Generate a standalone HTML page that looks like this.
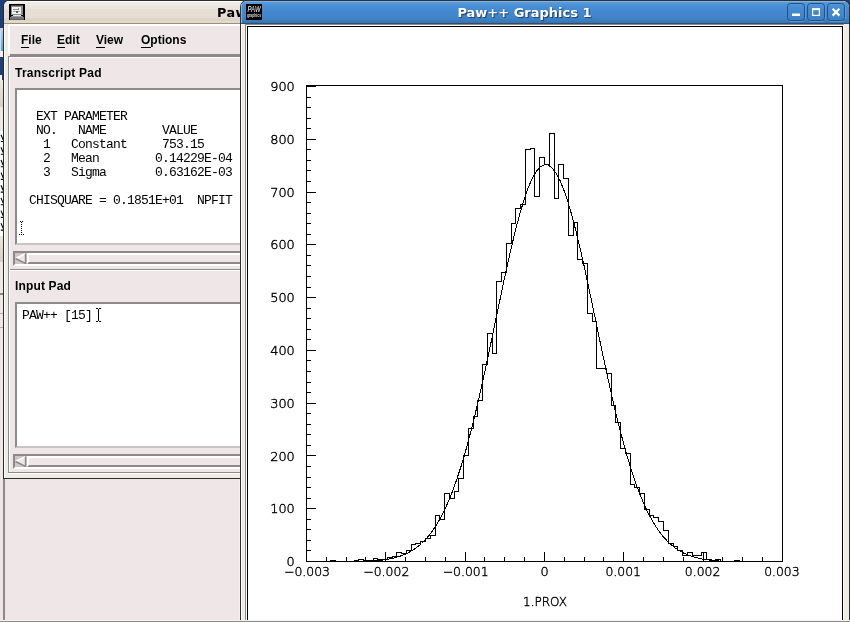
<!DOCTYPE html>
<html><head><meta charset="utf-8"><title>Paw++ Graphics 1</title>
<style>
html,body{margin:0;padding:0;}
body{width:850px;height:622px;overflow:hidden;background:#efe7e7;position:relative;font-family:"Liberation Sans",sans-serif;}
.a{position:absolute;}
.mono{font-family:"Liberation Mono",monospace;font-size:13px;letter-spacing:-0.8px;line-height:14px;white-space:pre;color:#000;}
.lbl{font-family:"Liberation Sans",sans-serif;font-weight:bold;font-size:12px;color:#000;white-space:pre;line-height:14px;}
.ta{background:#fff;border-style:solid;border-width:2px;border-color:#8e8a8a #c9c4c4 #c9c4c4 #8e8a8a;box-sizing:border-box;}
.sb{background:#cfc5c8;border-style:solid;border-width:2px;border-color:#8e8888 #fff #fff #8e8888;box-sizing:border-box;}
.sl{background:#efe7e7;border-style:solid;border-width:2px;border-color:#fff #8e8888 #8e8888 #fff;box-sizing:border-box;}
svg{position:absolute;left:0;top:0;}
svg text{font-family:"DejaVu Sans","Liberation Sans",sans-serif;font-weight:200;font-size:12px;fill:#000;stroke:#000;stroke-width:0.4px;}
</style></head><body>
<div id="w" class="a" style="left:0;top:0;width:850px;height:622px;will-change:transform">

<!-- left background strip -->
<div class="a" style="left:0;top:0;width:12px;height:28px;background:#1c3e7c"></div>
<div class="a" style="left:0;top:28px;width:4px;height:3px;background:#c4d2e6"></div>
<div class="a" style="left:0;top:31px;width:4px;height:20px;background:linear-gradient(#a8ccf4,#5a9ee4)"></div>
<div class="a" style="left:0;top:31px;width:1px;height:20px;background:#cfe0f4"></div>
<div class="a" style="left:0;top:51px;width:4px;height:6px;background:#eef2f8"></div>
<div class="a" style="left:0;top:57px;width:4px;height:23px;background:#1c3e7c"></div>
<div class="a" style="left:0;top:75px;width:2px;height:5px;background:#f4f4f4"></div>
<div class="a" style="left:0;top:80px;width:4px;height:27px;background:linear-gradient(#eee8e2,#d6cec2)"></div>
<div class="a" style="left:0;top:107px;width:4px;height:24px;background:#efe9e6"></div>
<div class="a" style="left:0;top:131px;width:4px;height:105px;background:#fff"></div>
<svg class="a" style="left:0;top:0" width="4" height="240" viewBox="0 0 4 240"><path d="M1 134.7L3.2 139.9M0.8 141.5h2.2 M1 147.3L3.2 152.5M0.8 154.2h2.2 M1 160.0L3.2 165.2M0.8 166.8h2.2 M1 172.6L3.2 177.8M0.8 179.4h2.2 M1 185.3L3.2 190.5M0.8 192.1h2.2 M1 197.9L3.2 203.1M0.8 204.8h2.2 M1 210.6L3.2 215.8M0.8 217.4h2.2 M1 223.2L3.2 228.4M0.8 230.1h2.2" stroke="#000" stroke-width="1.1" fill="none"/></svg>
<div class="a" style="left:0;top:236px;width:4px;height:26px;background:linear-gradient(#ece6e0,#d6cec2)"></div>
<div class="a" style="left:0;top:262px;width:4px;height:31px;background:#efe9e6"></div>
<div class="a" style="left:0;top:293px;width:4px;height:2px;background:#8a8686"></div>
<div class="a" style="left:0;top:313px;width:4px;height:1px;background:#b4aeae"></div>
<div class="a" style="left:0;top:327px;width:4px;height:1px;background:#b4aeae"></div>

<!-- left window (Paw++ executive) -->
<div class="a" style="left:3px;top:0;width:248px;height:479px;background:#2c2c26;border-top-left-radius:6px"></div>
<div class="a" style="left:4px;top:1px;width:247px;height:477px;background:#efebe7;border-top-left-radius:5px"></div>
<div class="a" style="left:4px;top:1px;width:247px;height:22px;border-top-left-radius:5px;background:linear-gradient(#fff 0,#fff 1px,#efece7 1px,#efece7 4px,#eee5dc 4px,#eee5dc 6px,#e8e4de 6px,#e8e4de 8px,#e6ded4 8px,#e6ded4 17px,#dcd5c8 17px,#dcd5c8 20px,#e2d8cb 20px)"></div>
<div class="a" style="left:4px;top:23px;width:240px;height:1px;background:#9c8e7a"></div>
<div class="a" style="left:4px;top:24px;width:1px;height:454px;background:#fff"></div>
<!-- icon -->
<svg class="a" style="left:9px;top:4px" width="16" height="16" viewBox="0 0 16 16" shape-rendering="crispEdges">
<rect width="16" height="16" fill="#000"/><rect x="2" y="1" width="12" height="10" fill="#8c8c8c"/><rect x="2" y="1" width="12" height="1" fill="#4a4a4a"/><rect x="3" y="3" width="9" height="7" fill="#f2f2f2"/>
<rect x="4" y="5" width="6" height="1" fill="#8a8a8a"/><rect x="4" y="7" width="7" height="1" fill="#a0a0a0"/><rect x="7" y="7" width="2" height="2" fill="#5a5a5a"/><rect x="9" y="4" width="1" height="2" fill="#888"/>
<rect x="4" y="11" width="8" height="1" fill="#e6e6e6"/>
<polygon points="2,12 14,12 15.5,16 0.5,16" fill="#767676"/><rect x="3" y="12" width="10" height="1" fill="#9c9c9c"/><rect x="1" y="15" width="14" height="1" fill="#5c5c5c"/>
</svg>
<div class="a" style="left:217px;top:5px;font-family:'DejaVu Sans','Liberation Sans',sans-serif;font-weight:bold;font-size:12.8px;line-height:16px;letter-spacing:0.45px;color:#000;white-space:pre">Paw++</div>

<!-- menubar -->
<div class="a" style="left:8px;top:24px;width:236px;height:30px;background:#fff"></div>
<div class="a" style="left:10px;top:26px;width:234px;height:28px;background:#efe7e7"></div>
<div class="a" style="left:10px;top:54px;width:234px;height:2px;background:#8e8888"></div>
<div class="a lbl" style="left:21px;top:33px">File</div>
<div class="a lbl" style="left:57px;top:33px">Edit</div>
<div class="a lbl" style="left:96px;top:33px">View</div>
<div class="a lbl" style="left:141px;top:33px">Options</div>
<div class="a" style="left:21px;top:47px;width:8px;height:1px;background:#000"></div>
<div class="a" style="left:57px;top:47px;width:8px;height:1px;background:#000"></div>
<div class="a" style="left:96px;top:47px;width:9px;height:1px;background:#000"></div>
<div class="a" style="left:141px;top:47px;width:10px;height:1px;background:#000"></div>

<!-- paned frame -->
<div class="a" style="left:8px;top:56px;width:236px;height:417px;background:#8e8888"></div>
<div class="a" style="left:9px;top:57px;width:235px;height:416px;background:#fff"></div>
<div class="a" style="left:10px;top:58px;width:234px;height:414px;background:#efe7e7"></div>
<div class="a" style="left:8px;top:472px;width:236px;height:1px;background:#8e8888"></div>
<div class="a" style="left:8px;top:473px;width:236px;height:1px;background:#fff"></div>

<div class="a lbl" style="left:15px;top:66px;letter-spacing:0.25px">Transcript Pad</div>
<div class="a ta" style="left:15px;top:88px;width:240px;height:157px"></div>
<div class="a mono" style="left:22px;top:96px">
  EXT PARAMETER
  NO.   NAME        VALUE
   1   Constant     753.15
   2   Mean        0.14229E-04
   3   Sigma       0.63162E-03

 CHISQUARE = 0.1851E+01  NPFIT</div>
<!-- stippled I-beam -->
<svg class="a" style="left:18px;top:221px" width="7" height="15" viewBox="0 0 7 15" shape-rendering="crispEdges">
<path d="M2 0.5h1M4 0.5h1M3 1.5h1M3 3.5h1M3 5.5h1M3 7.5h1M3 9.5h1M3 11.5h1M1 13.5h1M3 13.5h1M5 13.5h1" stroke="#000" stroke-width="1" fill="none"/>
</svg>
<div class="a sb" style="left:13px;top:251px;width:240px;height:15px"></div>
<svg class="a" style="left:15px;top:253px" width="12" height="11" viewBox="0 0 12 11">
<polygon points="0.5,5.5 10.5,0.5 10.5,10.5" fill="#efe7e7"/><path d="M0.5 5.5L10.5 0.5" stroke="#fff" stroke-width="1.4"/><path d="M10.5 0.5V10.5L0.5 5.5" stroke="#8e8888" stroke-width="1.4" fill="none"/>
</svg>
<div class="a sl" style="left:27px;top:253px;width:230px;height:11px"></div>

<div class="a" style="left:10px;top:269px;width:234px;height:1px;background:#8e8888"></div>
<div class="a" style="left:10px;top:270px;width:234px;height:1px;background:#fff"></div>

<div class="a lbl" style="left:15px;top:279px;letter-spacing:0.15px">Input Pad</div>
<div class="a ta" style="left:15px;top:302px;width:240px;height:146px"></div>
<div class="a mono" style="left:22px;top:309px">PAW++ [15]</div>
<svg class="a" style="left:96px;top:308px" width="6" height="14" viewBox="0 0 6 14" shape-rendering="crispEdges">
<path d="M0 0.5h2M3 0.5h2M2.5 1v12M0 13.5h2M3 13.5h2" stroke="#000" stroke-width="1" fill="none"/>
</svg>
<div class="a sb" style="left:13px;top:454px;width:240px;height:15px"></div>
<svg class="a" style="left:15px;top:456px" width="12" height="11" viewBox="0 0 12 11">
<polygon points="0.5,5.5 10.5,0.5 10.5,10.5" fill="#efe7e7"/><path d="M0.5 5.5L10.5 0.5" stroke="#fff" stroke-width="1.4"/><path d="M10.5 0.5V10.5L0.5 5.5" stroke="#8e8888" stroke-width="1.4" fill="none"/>
</svg>
<div class="a sl" style="left:27px;top:456px;width:230px;height:11px"></div>

<!-- below the left window -->
<div class="a" style="left:3px;top:479px;width:2px;height:141px;background:#8e8888"></div>

<!-- graphics window -->
<div class="a" style="left:840px;top:0;width:10px;height:10px;background:#1c3e7c"></div>
<div class="a" style="left:239px;top:479px;width:1px;height:141px;background:#f7efef"></div>
<div class="a" style="left:240px;top:0;width:610px;height:620px;background:#30302c;border-radius:7px 7px 0 0"></div>
<div class="a" style="left:241px;top:1px;width:608px;height:619px;background:#efebe7;border-radius:6px 6px 0 0"></div>
<div class="a" style="left:241px;top:1px;width:608px;height:23px;border-radius:6px 6px 0 0;background:linear-gradient(#7ab4f0 0,#7ab4f0 1px,#5a9ad8 1px,#4f93d6 4px,#4a8fd6 5px,#438ad0 9px,#4285cc 15px,#3a80c4 19px,#3a75b2 21px,#3a75b2 22px,#2c4e70 22px)"></div>
<div class="a" style="left:241px;top:4px;width:1px;height:19px;background:#7ab4f0"></div>
<div class="a" style="left:241px;top:24px;width:1px;height:596px;background:#fff"></div>
<!-- title text -->
<div class="a" style="left:264px;top:3px;width:521px;text-align:center;font-family:'DejaVu Sans','Liberation Sans',sans-serif;font-weight:bold;font-size:13px;line-height:20px;color:#fff;text-shadow:1px 1px 1px #1c3c66;white-space:pre">Paw++ Graphics 1</div>
<!-- PAW icon -->
<svg class="a" style="left:246px;top:4px" width="16" height="16" viewBox="0 0 16 16">
<rect width="16" height="16" fill="#000"/>
<text x="8" y="7.5" text-anchor="middle" style="font-family:'Liberation Sans',sans-serif;font-size:8.5px;font-style:italic;font-weight:400;stroke:none;fill:#fff" textLength="13" lengthAdjust="spacingAndGlyphs">PAW</text>
<text x="8" y="13" text-anchor="middle" style="font-family:'Liberation Sans',sans-serif;font-size:5px;font-weight:bold;stroke:none;fill:#ddd" textLength="14" lengthAdjust="spacingAndGlyphs">graphics</text>
</svg>
<!-- buttons -->
<svg class="a" style="left:786px;top:2px" width="62" height="21" viewBox="0 0 62 21">
<g fill="none" stroke="#28507e" stroke-width="1">
<rect x="1.5" y="1.5" width="17" height="17" rx="3"/><rect x="21.5" y="1.5" width="17" height="17" rx="3"/><rect x="41.5" y="1.5" width="17" height="17" rx="3"/>
</g>
<g fill="none" stroke="#5d9fe0" stroke-width="1" opacity="0.8">
<path d="M3.5 19.5h14M19.5 4v13M23.5 19.5h14M39.5 4v13M43.5 19.5h14M59.5 4v13"/>
</g>
<rect x="6" y="11.5" width="8" height="2.5" fill="#fff"/>
<rect x="26.6" y="7" width="6.8" height="6.4" fill="none" stroke="#fff" stroke-width="1.2"/><rect x="26" y="6.2" width="8" height="2" fill="#fff"/>
<path d="M46.6 6.8l6.8 6.8M53.4 6.8l-6.8 6.8" stroke="#fff" stroke-width="2.2"/>
</svg>

<!-- canvas frame -->
<div class="a" style="left:245px;top:24px;width:599px;height:596px;background:#8e8882"></div>
<div class="a" style="left:246px;top:25px;width:598px;height:595px;background:#fff"></div>
<div class="a" style="left:247px;top:26px;width:596px;height:594px;background:#000"></div>
<div class="a" style="left:248px;top:27px;width:594px;height:593px;background:#fff"></div>

<svg width="850" height="622" viewBox="0 0 850 622">
<defs><clipPath id="cb"><rect x="306" y="85" width="477" height="477"/></clipPath></defs>
<g shape-rendering="crispEdges" fill="none" stroke="#000" stroke-width="1">
<rect x="306.5" y="85.5" width="476" height="476"/>
<path d="M306 561.5h10 M306 550.5h5 M306 540.5h5 M306 529.5h5 M306 519.5h5 M306 508.5h10 M306 498.5h5 M306 487.5h5 M306 477.5h5 M306 466.5h5 M306 455.5h10 M306 445.5h5 M306 434.5h5 M306 424.5h5 M306 413.5h5 M306 403.5h10 M306 392.5h5 M306 382.5h5 M306 371.5h5 M306 360.5h5 M306 350.5h10 M306 339.5h5 M306 329.5h5 M306 318.5h5 M306 308.5h5 M306 297.5h10 M306 287.5h5 M306 276.5h5 M306 265.5h5 M306 255.5h5 M306 244.5h10 M306 234.5h5 M306 223.5h5 M306 213.5h5 M306 202.5h5 M306 192.5h10 M306 181.5h5 M306 170.5h5 M306 160.5h5 M306 149.5h5 M306 139.5h10 M306 128.5h5 M306 118.5h5 M306 107.5h5 M306 97.5h5 M306 86.5h10 M306.5 562v-10 M326.5 562v-5 M346.5 562v-5 M365.5 562v-5 M385.5 562v-10 M405.5 562v-5 M425.5 562v-5 M445.5 562v-5 M465.5 562v-10 M484.5 562v-5 M504.5 562v-5 M524.5 562v-5 M544.5 562v-10 M564.5 562v-5 M584.5 562v-5 M603.5 562v-5 M623.5 562v-10 M643.5 562v-5 M663.5 562v-5 M683.5 562v-5 M703.5 562v-10 M722.5 562v-5 M742.5 562v-5 M762.5 562v-5 M782.5 562v-10"/>
<g clip-path="url(#cb)"><path d="M306.5 561.5 L306.5 561.5 L311.5 561.5 L311.5 561.5 L316.5 561.5 L316.5 561.5 L320.5 561.5 L320.5 561.5 L325.5 561.5 L325.5 561.5 L330.5 561.5 L330.5 560.5 L335.5 560.5 L335.5 561.5 L339.5 561.5 L339.5 561.5 L344.5 561.5 L344.5 561.5 L349.5 561.5 L349.5 561.5 L354.5 561.5 L354.5 560.5 L358.5 560.5 L358.5 559.5 L363.5 559.5 L363.5 560.5 L368.5 560.5 L368.5 560.5 L373.5 560.5 L373.5 558.5 L377.5 558.5 L377.5 559.5 L382.5 559.5 L382.5 559.5 L387.5 559.5 L387.5 557.5 L392.5 557.5 L392.5 556.5 L396.5 556.5 L396.5 552.5 L401.5 552.5 L401.5 553.5 L406.5 553.5 L406.5 550.5 L411.5 550.5 L411.5 544.5 L415.5 544.5 L415.5 543.5 L420.5 543.5 L420.5 541.5 L425.5 541.5 L425.5 538.5 L430.5 538.5 L430.5 535.5 L435.5 535.5 L435.5 515.5 L439.5 515.5 L439.5 519.5 L444.5 519.5 L444.5 493.5 L449.5 493.5 L449.5 498.5 L454.5 498.5 L454.5 491.5 L458.5 491.5 L458.5 478.5 L463.5 478.5 L463.5 455.5 L468.5 455.5 L468.5 428.5 L473.5 428.5 L473.5 416.5 L477.5 416.5 L477.5 400.5 L482.5 400.5 L482.5 364.5 L487.5 364.5 L487.5 333.5 L492.5 333.5 L492.5 353.5 L496.5 353.5 L496.5 281.5 L501.5 281.5 L501.5 272.5 L506.5 272.5 L506.5 243.5 L511.5 243.5 L511.5 223.5 L515.5 223.5 L515.5 208.5 L520.5 208.5 L520.5 204.5 L525.5 204.5 L525.5 149.5 L530.5 149.5 L530.5 148.5 L534.5 148.5 L534.5 196.5 L539.5 196.5 L539.5 157.5 L544.5 157.5 L544.5 164.5 L549.5 164.5 L549.5 133.5 L554.5 133.5 L554.5 198.5 L558.5 198.5 L558.5 164.5 L563.5 164.5 L563.5 178.5 L568.5 178.5 L568.5 235.5 L573.5 235.5 L573.5 222.5 L577.5 222.5 L577.5 259.5 L582.5 259.5 L582.5 263.5 L587.5 263.5 L587.5 313.5 L592.5 313.5 L592.5 321.5 L596.5 321.5 L596.5 368.5 L601.5 368.5 L601.5 368.5 L606.5 368.5 L606.5 373.5 L611.5 373.5 L611.5 405.5 L615.5 405.5 L615.5 422.5 L620.5 422.5 L620.5 448.5 L625.5 448.5 L625.5 453.5 L630.5 453.5 L630.5 484.5 L634.5 484.5 L634.5 487.5 L639.5 487.5 L639.5 493.5 L644.5 493.5 L644.5 509.5 L649.5 509.5 L649.5 515.5 L653.5 515.5 L653.5 517.5 L658.5 517.5 L658.5 521.5 L663.5 521.5 L663.5 530.5 L668.5 530.5 L668.5 543.5 L673.5 543.5 L673.5 546.5 L677.5 546.5 L677.5 550.5 L682.5 550.5 L682.5 555.5 L687.5 555.5 L687.5 552.5 L692.5 552.5 L692.5 555.5 L696.5 555.5 L696.5 555.5 L701.5 555.5 L701.5 552.5 L706.5 552.5 L706.5 559.5 L711.5 559.5 L711.5 560.5 L715.5 560.5 L715.5 559.5 L720.5 559.5 L720.5 561.5 L725.5 561.5 L725.5 561.5 L730.5 561.5 L730.5 561.5 L734.5 561.5 L734.5 560.5 L739.5 560.5 L739.5 561.5 L744.5 561.5 L744.5 561.5 L749.5 561.5 L749.5 561.5 L753.5 561.5 L753.5 561.5 L758.5 561.5 L758.5 561.5 L763.5 561.5 L763.5 561.5 L768.5 561.5 L768.5 561.5 L772.5 561.5 L772.5 561.5 L777.5 561.5 L777.5 561.5 L782.5 561.5 L782.5 561.5"/>
<polyline points="306.5,562.0 310.5,562.0 314.4,562.0 318.4,562.0 322.4,562.0 326.3,562.0 330.3,562.0 334.3,561.9 338.2,561.9 342.2,561.9 346.2,561.9 350.1,561.8 354.1,561.7 358.1,561.6 362.0,561.5 366.0,561.4 370.0,561.1 373.9,560.9 377.9,560.5 381.9,560.1 385.8,559.5 389.8,558.8 393.8,558.0 397.7,556.9 401.7,555.6 405.7,554.0 409.6,552.0 413.6,549.6 417.6,546.8 421.5,543.5 425.5,539.5 429.5,534.9 433.4,529.6 437.4,523.4 441.4,516.4 445.3,508.4 449.3,499.4 453.3,489.3 457.2,478.1 461.2,465.9 465.2,452.5 469.1,438.0 473.1,422.6 477.1,406.1 481.0,388.8 485.0,370.8 489.0,352.3 492.9,333.3 496.9,314.3 500.9,295.3 504.8,276.6 508.8,258.6 512.8,241.4 516.7,225.4 520.7,210.8 524.7,197.8 528.6,186.7 532.6,177.7 536.6,171.0 540.5,166.6 544.5,164.6 548.5,165.1 552.4,168.2 556.4,173.6 560.4,181.3 564.3,191.3 568.3,203.2 572.3,216.9 576.2,232.1 580.2,248.7 584.2,266.3 588.1,284.6 592.1,303.4 596.1,322.5 600.0,341.5 604.0,360.3 608.0,378.7 611.9,396.4 615.9,413.3 619.9,429.4 623.8,444.4 627.8,458.4 631.8,471.3 635.7,483.1 639.7,493.8 643.7,503.4 647.6,511.9 651.6,519.5 655.6,526.2 659.5,532.0 663.5,537.0 667.5,541.3 671.4,545.0 675.4,548.1 679.4,550.7 683.3,552.9 687.3,554.7 691.3,556.2 695.2,557.4 699.2,558.4 703.2,559.2 707.1,559.8 711.1,560.3 715.1,560.7 719.0,561.0 723.0,561.2 727.0,561.4 730.9,561.6 734.9,561.7 738.9,561.8 742.8,561.8 746.8,561.9 750.8,561.9 754.7,561.9 758.7,562.0 762.7,562.0 766.6,562.0 770.6,562.0 774.6,562.0 778.5,562.0 782.5,562.0"/></g>
</g>
<text x="294.8" y="566.1" textLength="8.2" lengthAdjust="spacingAndGlyphs" text-anchor="end">0</text>
<text x="294.8" y="513.3" textLength="24.6" lengthAdjust="spacingAndGlyphs" text-anchor="end">100</text>
<text x="294.8" y="460.5" textLength="24.6" lengthAdjust="spacingAndGlyphs" text-anchor="end">200</text>
<text x="294.8" y="407.8" textLength="24.6" lengthAdjust="spacingAndGlyphs" text-anchor="end">300</text>
<text x="294.8" y="355.0" textLength="24.6" lengthAdjust="spacingAndGlyphs" text-anchor="end">400</text>
<text x="294.8" y="302.2" textLength="24.6" lengthAdjust="spacingAndGlyphs" text-anchor="end">500</text>
<text x="294.8" y="249.4" textLength="24.6" lengthAdjust="spacingAndGlyphs" text-anchor="end">600</text>
<text x="294.8" y="196.7" textLength="24.6" lengthAdjust="spacingAndGlyphs" text-anchor="end">700</text>
<text x="294.8" y="143.9" textLength="24.6" lengthAdjust="spacingAndGlyphs" text-anchor="end">800</text>
<text x="294.8" y="91.1" textLength="24.6" lengthAdjust="spacingAndGlyphs" text-anchor="end">900</text>

<text x="307.0" y="576" textLength="46.0" lengthAdjust="spacingAndGlyphs" text-anchor="middle">−0.003</text>
<text x="386.3" y="576" textLength="46.0" lengthAdjust="spacingAndGlyphs" text-anchor="middle">−0.002</text>
<text x="465.7" y="576" textLength="46.0" lengthAdjust="spacingAndGlyphs" text-anchor="middle">−0.001</text>
<text x="544.5" y="576" textLength="8.2" lengthAdjust="spacingAndGlyphs" text-anchor="middle">0</text>
<text x="623.2" y="576" textLength="35.5" lengthAdjust="spacingAndGlyphs" text-anchor="middle">0.001</text>
<text x="702.6" y="576" textLength="35.5" lengthAdjust="spacingAndGlyphs" text-anchor="middle">0.002</text>
<text x="781.9" y="576" textLength="35.5" lengthAdjust="spacingAndGlyphs" text-anchor="middle">0.003</text>

<text x="545" y="606" text-anchor="middle" textLength="44" lengthAdjust="spacingAndGlyphs">1.PROX</text>
</svg>

<!-- bottom rows -->
<div class="a" style="left:0;top:620px;width:850px;height:1px;background:#f4f4f4"></div>
<div class="a" style="left:0;top:621px;width:850px;height:1px;background:#8c8c8c"></div>
</div>
</body></html>
